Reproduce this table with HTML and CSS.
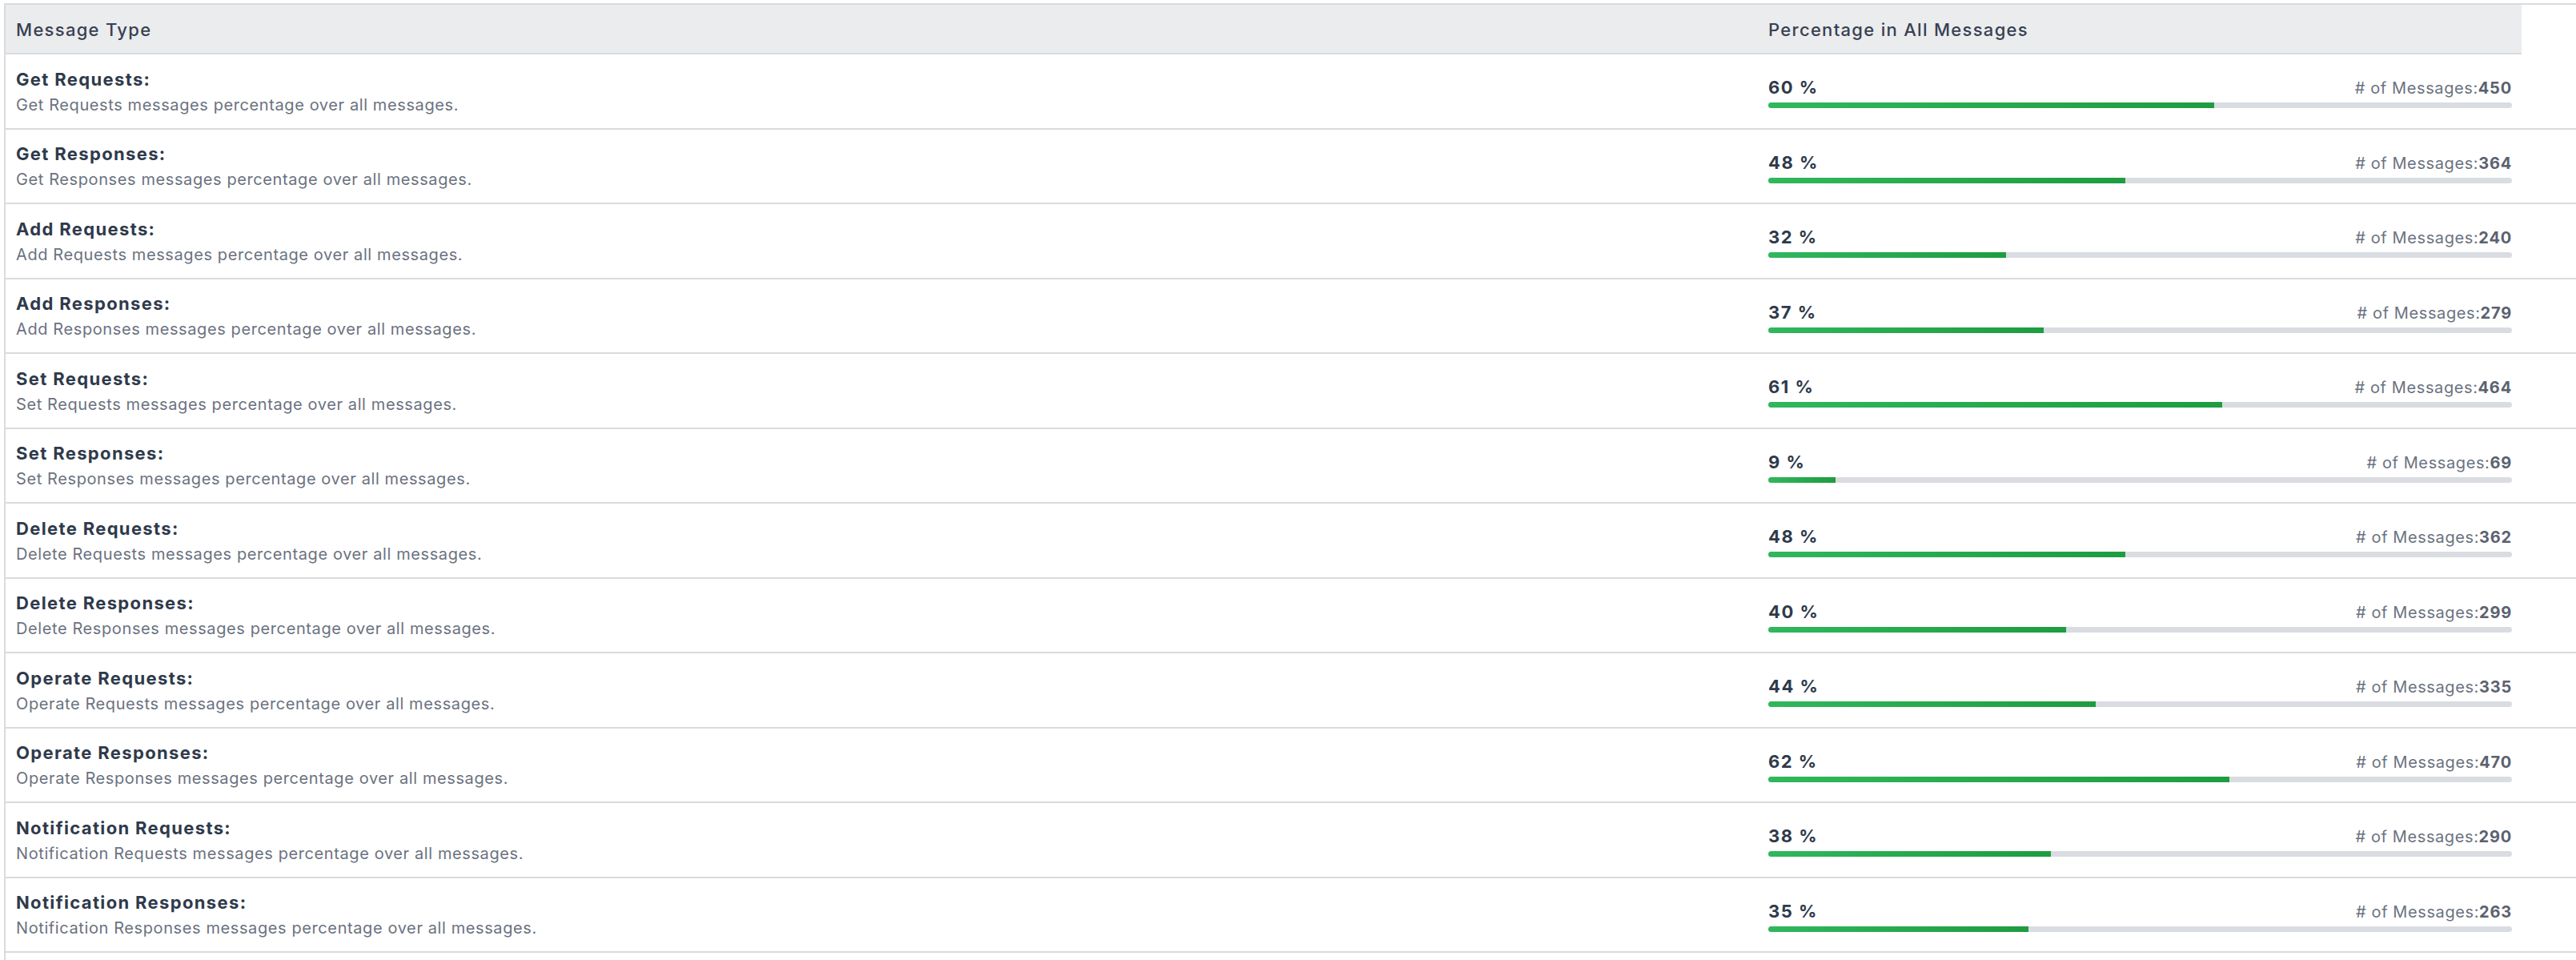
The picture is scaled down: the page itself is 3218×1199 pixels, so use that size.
FILE: index.html
```html
<!DOCTYPE html>
<html lang="en">
<head>
<meta charset="utf-8">
<title>Message Types</title>
<link rel="stylesheet" href="styles.css">
</head>
<body>
<div class="table">
  <div class="thead">
    <div class="th th-type">Message Type</div>
    <div class="th th-pct">Percentage in All Messages</div>
  </div>

  <div class="row">
    <div class="cell-type"><div class="title">Get Requests:</div><div class="desc">Get Requests messages percentage over all messages.</div></div>
    <div class="cell-pct"><div class="pct-line"><span class="pct">60 %</span><span class="count"># of Messages:<b>450</b></span></div><div class="track"><div class="fill" style="width:60%"></div></div></div>
  </div>
  <div class="row">
    <div class="cell-type"><div class="title">Get Responses:</div><div class="desc">Get Responses messages percentage over all messages.</div></div>
    <div class="cell-pct"><div class="pct-line"><span class="pct">48 %</span><span class="count"># of Messages:<b>364</b></span></div><div class="track"><div class="fill" style="width:48%"></div></div></div>
  </div>
  <div class="row">
    <div class="cell-type"><div class="title">Add Requests:</div><div class="desc">Add Requests messages percentage over all messages.</div></div>
    <div class="cell-pct"><div class="pct-line"><span class="pct">32 %</span><span class="count"># of Messages:<b>240</b></span></div><div class="track"><div class="fill" style="width:32%"></div></div></div>
  </div>
  <div class="row">
    <div class="cell-type"><div class="title">Add Responses:</div><div class="desc">Add Responses messages percentage over all messages.</div></div>
    <div class="cell-pct"><div class="pct-line"><span class="pct">37 %</span><span class="count"># of Messages:<b>279</b></span></div><div class="track"><div class="fill" style="width:37%"></div></div></div>
  </div>
  <div class="row">
    <div class="cell-type"><div class="title">Set Requests:</div><div class="desc">Set Requests messages percentage over all messages.</div></div>
    <div class="cell-pct"><div class="pct-line"><span class="pct">61 %</span><span class="count"># of Messages:<b>464</b></span></div><div class="track"><div class="fill" style="width:61%"></div></div></div>
  </div>
  <div class="row">
    <div class="cell-type"><div class="title">Set Responses:</div><div class="desc">Set Responses messages percentage over all messages.</div></div>
    <div class="cell-pct"><div class="pct-line"><span class="pct">9 %</span><span class="count"># of Messages:<b>69</b></span></div><div class="track"><div class="fill" style="width:9%"></div></div></div>
  </div>
  <div class="row">
    <div class="cell-type"><div class="title">Delete Requests:</div><div class="desc">Delete Requests messages percentage over all messages.</div></div>
    <div class="cell-pct"><div class="pct-line"><span class="pct">48 %</span><span class="count"># of Messages:<b>362</b></span></div><div class="track"><div class="fill" style="width:48%"></div></div></div>
  </div>
  <div class="row">
    <div class="cell-type"><div class="title">Delete Responses:</div><div class="desc">Delete Responses messages percentage over all messages.</div></div>
    <div class="cell-pct"><div class="pct-line"><span class="pct">40 %</span><span class="count"># of Messages:<b>299</b></span></div><div class="track"><div class="fill" style="width:40%"></div></div></div>
  </div>
  <div class="row">
    <div class="cell-type"><div class="title">Operate Requests:</div><div class="desc">Operate Requests messages percentage over all messages.</div></div>
    <div class="cell-pct"><div class="pct-line"><span class="pct">44 %</span><span class="count"># of Messages:<b>335</b></span></div><div class="track"><div class="fill" style="width:44%"></div></div></div>
  </div>
  <div class="row">
    <div class="cell-type"><div class="title">Operate Responses:</div><div class="desc">Operate Responses messages percentage over all messages.</div></div>
    <div class="cell-pct"><div class="pct-line"><span class="pct">62 %</span><span class="count"># of Messages:<b>470</b></span></div><div class="track"><div class="fill" style="width:62%"></div></div></div>
  </div>
  <div class="row">
    <div class="cell-type"><div class="title">Notification Requests:</div><div class="desc">Notification Requests messages percentage over all messages.</div></div>
    <div class="cell-pct"><div class="pct-line"><span class="pct">38 %</span><span class="count"># of Messages:<b>290</b></span></div><div class="track"><div class="fill" style="width:38%"></div></div></div>
  </div>
  <div class="row">
    <div class="cell-type"><div class="title">Notification Responses:</div><div class="desc">Notification Responses messages percentage over all messages.</div></div>
    <div class="cell-pct"><div class="pct-line"><span class="pct">35 %</span><span class="count"># of Messages:<b>263</b></span></div><div class="track"><div class="fill" style="width:35%"></div></div></div>
  </div>
</div>
</body>
</html>
```

FILE: styles.css
```css
html, body {
  margin: 0;
  padding: 0;
  background: #ffffff;
}

body {
  font-family: Inter, "Noto Sans", "Liberation Sans", sans-serif;
  color: #374151;
  overflow: hidden;
}

.table {
  margin: 4px 0 0 5px;
  border-top: 2px solid #d9dbdf;
  border-left: 2px solid #d9dbdf;
  min-height: 1300px;
}

.thead {
  display: grid;
  grid-template-columns: 2189px 954px;
  width: 3143px;
  height: 60px;
  background: #ebecee;
  border-bottom: 2px solid #d9dbdf;
  align-items: center;
}

.th {
  font-size: 22px;
  font-weight: 500;
  letter-spacing: 1.3px;
  color: #374151;
  line-height: 28px;
  padding-top: 1px;
}

.th-type {
  padding-left: 13px;
}

.th-pct {
  padding-left: 13px;
}

.row {
  display: grid;
  grid-template-columns: 2189px 954px;
  height: 91.5px;
  border-bottom: 2px solid #d9dbdf;
  align-items: center;
}

.cell-type {
  padding-left: 13px;
  display: flex;
  flex-direction: column;
  gap: 4px;
  padding-top: 2px;
}

.title {
  font-size: 22px;
  font-weight: 700;
  letter-spacing: 1.35px;
  line-height: 28px;
  color: #2f3a4b;
}

.desc {
  font-size: 20px;
  font-weight: 400;
  letter-spacing: 0.6px;
  line-height: 28px;
  color: #6b7280;
}

.cell-pct {
  padding: 3px 12px 0 13px;
  display: flex;
  flex-direction: column;
  gap: 4px;
}

.pct-line {
  display: flex;
  justify-content: space-between;
  align-items: baseline;
  line-height: 28px;
}

.pct {
  font-size: 22px;
  font-weight: 700;
  letter-spacing: 1.5px;
  color: #2f3a4b;
}

.count {
  font-size: 20px;
  font-weight: 400;
  letter-spacing: 0.6px;
  color: #6b7280;
}

.count b {
  font-weight: 700;
  font-size: 20px;
  letter-spacing: 0.8px;
  color: #5b6270;
}

.track {
  height: 7px;
  border-radius: 4px;
  background: #d9dce1;
  overflow: hidden;
}

.fill {
  height: 100%;
  background: linear-gradient(90deg, #30b75c, #1e9c40);
}
```
